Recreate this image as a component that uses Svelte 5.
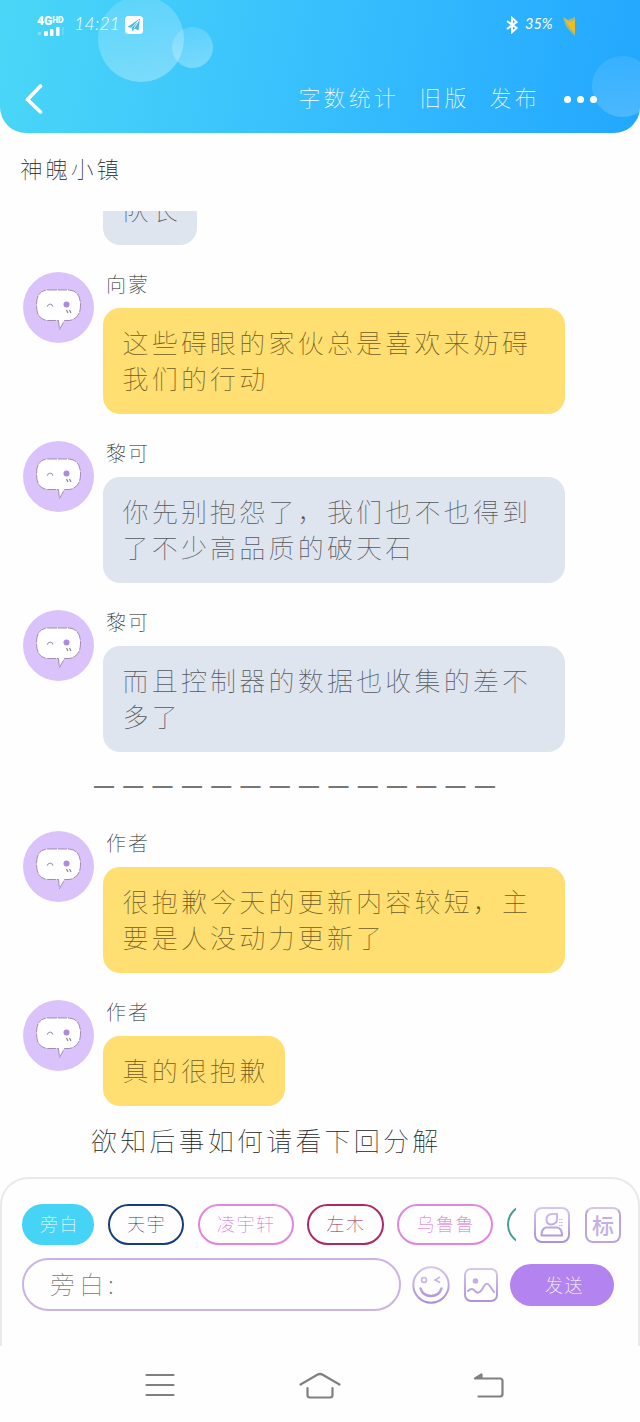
<script lang="ts">
	interface Message {
		kind: "left" | "narration" | "dashes";
		name?: string;
		text: string;
		color?: "yellow" | "grey";
	}

	let draft: string = $state("");

	const messages: Message[] = [
		{ kind: "left", name: "向蒙", color: "yellow", text: "这些碍眼的家伙总是喜欢来妨碍我们的行动" },
		{ kind: "left", name: "黎可", color: "grey", text: "你先别抱怨了，我们也不也得到了不少高品质的破天石" },
		{ kind: "left", name: "黎可", color: "grey", text: "而且控制器的数据也收集的差不多了" },
		{ kind: "dashes", text: "——————————————" },
		{ kind: "left", name: "作者", color: "yellow", text: "很抱歉今天的更新内容较短，主要是人没动力更新了" },
		{ kind: "left", name: "作者", color: "yellow", text: "真的很抱歉" },
		{ kind: "narration", text: "欲知后事如何请看下回分解" },
	];

	const roles = [
		{ name: "旁白", cls: "aside" },
		{ name: "天宇", cls: "navy" },
		{ name: "凌宇轩", cls: "pink" },
		{ name: "左木", cls: "crimson" },
		{ name: "乌鲁鲁", cls: "pink" },
		{ name: "", cls: "teal" },
	];
</script>

<div class="page">
	<header>
		<div class="bubble-deco big"></div>
		<div class="bubble-deco small"></div>
		<div class="bubble-deco side"></div>
		<div class="status">
			<div class="signal">
				<span class="net">4G<small>HD</small></span>
				<svg width="27" height="9" viewBox="0 0 27 9" fill="#fff">
					<rect x="1" y="5" width="3" height="3" opacity=".3" />
					<rect x="7" y="4" width="4" height="5" rx="1" />
					<rect x="13" y="2" width="3.5" height="7" rx="1" />
					<rect x="19" y="0" width="3.5" height="9" rx="1" />
					<rect x="25" y="0" width="1.5" height="8" opacity=".2" />
				</svg>
			</div>
			<span class="time">14:21</span>
			<svg class="plane" width="18" height="18" viewBox="0 0 18 18">
				<rect width="18" height="18" rx="3.5" fill="#fff" />
				<path d="M2.500 11 15 2.5 13.500 14.500 9.500 12.500 7.500 15.500 6.500 11.800Z" fill="#45b9e8" />
				<path d="M6.500 11.800 14 4 9 12.500" fill="none" stroke="#fff" stroke-width=".8" />
			</svg>
			<span class="spacer"></span>
			<svg width="12" height="18" viewBox="0 0 12 18" fill="none" stroke="#fff" stroke-width="2">
				<path d="M1 5 10.5 12 6 16.2V1.8L10.5 6 1 13" />
			</svg>
			<span class="percent">35%</span>
			<svg class="battery" width="14" height="22" viewBox="0 0 14 22">
				<path d="M1 2 6 5 13 2V21L8 16 4 11Z" fill="#9fb98a" />
				<path d="M2 3 8 7 13 5V18L8 13Z" fill="#f4bd16" />
			</svg>
		</div>
		<nav>
			<svg width="18" height="32" viewBox="0 0 18 32" fill="none" stroke="#fff" stroke-width="3.6" stroke-linecap="round" stroke-linejoin="round">
				<path d="M15.5 3 2.5 16.5 15.5 29" />
			</svg>
			<span class="spacer"></span>
			<span>字数统计</span>
			<span>旧版</span>
			<span>发布</span>
			<div class="dots"><i></i><i></i><i></i></div>
		</nav>
	</header>

	<h1>神魄小镇</h1>

	<main>
		<div class="message cut">
			<div class="body">
				<p class="text grey">队长</p>
			</div>
		</div>
		{#each messages as message}
			{#if message.kind === "left"}
				<div class="message">
					<svg class="avatar" width="71" height="71" viewBox="0 0 71 71">
						<circle cx="35.5" cy="35.5" r="35.5" fill="#dac2fb" />
						<path class="face" d="M25 18H46Q57.500 19 57.500 33T46 48.500H41.500L36.500 57.500 35.500 48.500H25Q13.500 48 13.500 33T25 18Z" />
						<path d="M24 34.500Q27.500 29.500 30 34.500" fill="none" stroke="#a08bb0" stroke-width="1.200" />
						<circle cx="43.5" cy="32.5" r="3" fill="#ab8be2" />
						<path d="M43.5 38 45 41M46.5 38 48 41" stroke="#8d7d9c" stroke-width="1.200" />
					</svg>
					<div class="body">
						<div class="name">{message.name}</div>
						<p class="text {message.color}">{message.text}</p>
					</div>
				</div>
			{:else}
				<div class={message.kind}>{message.text}</div>
			{/if}
		{/each}
	</main>

	<footer>
		<div class="row">
			<div class="roles">
				{#each roles as role}
					<span class="role {role.cls}">{role.name}</span>
				{/each}
			</div>
			<svg class="person" width="36" height="36" viewBox="0 0 36 36" fill="none" stroke="url(#violet)" stroke-width="2">
				<defs>
					<linearGradient id="violet" gradientUnits="userSpaceOnUse" x1="0" y1="0" x2="0" y2="38">
						<stop offset="0" stop-color="#d9c8ef" />
						<stop offset="1" stop-color="#a98bd4" />
					</linearGradient>
				</defs>
				<rect x="1" y="1" width="34" height="34" rx="7" />
				<path d="M23 7H18Q12.500 7.500 12.500 12.500 12.500 17.500 17.500 17.500 23 17 23 12Z" />
				<path d="M12 20.500H23.500Q28 21.500 28 28.500H7.500Q7.500 21.500 12 20.500Z" stroke-linejoin="round" />
				<path d="M25 12.500h3.500M25 15.500h3.500M25 18.500h3.500" stroke-width="1.2" stroke-dasharray="1.5 .5" />
			</svg>
			<span class="mark">标</span>
		</div>
		<div class="row second">
			<input type="text" placeholder="旁白:" bind:value={draft} />
			<svg class="smile" width="38" height="38" viewBox="0 0 38 38" fill="none" stroke="url(#violet)" stroke-width="2">
				<circle cx="19" cy="19" r="17.7" />
				<circle cx="12" cy="14" r="2.5" stroke-width="1.5" />
				<path d="M28 11 23 14 28 16.5" stroke-width="1.5" />
				<path d="M8.5 22.5Q11 30 19 30T29.5 22.5" stroke-width="2.4" stroke-linecap="round" />
			</svg>
			<svg class="photo" width="34" height="34" viewBox="0 0 34 34" fill="none" stroke="url(#violet)" stroke-width="2">
				<rect x="1" y="1" width="32" height="32" rx="6" />
				<circle cx="11.5" cy="13" r="2.8" fill="#c5aee8" stroke="none" />
				<path d="M4 23Q8 19 11 23 14.5 27 18 21.5 22 13 25 17L30 24" stroke-linecap="round" />
			</svg>
			<button>发送</button>
		</div>
	</footer>

	<div class="system">
		<svg width="30" height="24" viewBox="0 0 30 24">
			<path d="M1.5 2H28.5M1.5 12H28.5M1.5 22H28.5" />
		</svg>
		<svg width="42" height="27" viewBox="0 0 42 27">
			<path d="M1.5 12.5 17 3.5Q21 .5 25 3.500L40.5 12.5M8.5 16V23Q8.5 25.5 11 25.5H31Q33.5 25.5 33.5 23V16" />
		</svg>
		<svg width="31" height="25" viewBox="0 0 31 25">
			<path d="M8.500 1.500 2 5.500H27Q29.5 5.5 29.5 8V21Q29.5 23.500 27 23.500H5.5M3 5.200H8.500V2" />
		</svg>
	</div>
</div>

<style>
	:global(body) {
		margin: 0;
		background: #fefefe;
	}

	.page {
		width: 640px;
		height: 1422px;
		display: flex;
		flex-direction: column;
		overflow: hidden;
		font-family: "Noto Sans CJK SC", sans-serif;
		font-weight: 100;
		color: #222;
	}

	header {
		position: relative;
		height: 133px;
		flex: none;
		box-sizing: border-box;
		overflow: hidden;
		border-radius: 0 0 26px 26px;
		background: linear-gradient(100deg, #4ad7f7 0%, #37bffd 50%, #22a7ff 100%);
		color: #fff;
	}

	.bubble-deco {
		position: absolute;
		border-radius: 50%;
		background: linear-gradient(160deg, rgba(255, 255, 255, 0.12), rgba(255, 255, 255, 0.33));
	}

	.big {
		left: 98px;
		top: -4px;
		width: 86px;
		height: 86px;
	}

	.small {
		left: 172px;
		top: 27px;
		width: 41px;
		height: 41px;
	}

	.side {
		left: 592px;
		top: 56px;
		width: 61px;
		height: 61px;
		opacity: 0.6;
	}

	.status {
		position: relative;
		display: flex;
		align-items: center;
		height: 50px;
		padding: 0 64px 0 37px;
	}

	.signal {
		display: flex;
		flex-direction: column;
		width: 28px;
	}

	.net {
		font: 900 12px/11px Roboto, sans-serif;
		white-space: nowrap;
	}

	.net small {
		font-size: 8.5px;
		vertical-align: 2px;
	}

	.time {
		width: 51px;
		margin: -4px 0 0 9px;
		font: italic 300 18px/30px Lato, sans-serif;
	}

	.spacer {
		flex: 1;
	}

	.percent {
		width: 29px;
		margin: -2px 8px 0 7px;
		font: italic 14.5px/24px Lato, sans-serif;
	}

	.battery {
		margin-top: 2px;
	}

	nav {
		position: relative;
		display: flex;
		align-items: center;
		height: 100px;
		margin-top: -1px;
		padding: 0 43px 0 25px;
		gap: 20px;
		font-size: 22px;
		letter-spacing: 3.2px;
	}

	nav span:not(.spacer) {
		margin-top: -7px;
	}

	.dots {
		display: flex;
		gap: 6px;
		margin-left: 4px;
	}

	.dots i {
		width: 7px;
		height: 7px;
		border-radius: 50%;
		background: #fff;
	}

	h1 {
		flex: none;
		height: 78px;
		margin: 0;
		padding: 0 20px;
		box-sizing: border-box;
		font-size: 22.5px;
		font-weight: 100;
		line-height: 70px;
		letter-spacing: 3px;
	}

	main {
		flex: none;
		height: 966px;
		overflow: hidden;
	}

	.message {
		display: flex;
		align-items: flex-start;
		margin: 0 0 27px 23px;
	}

	.cut {
		margin: -37px 0 27px 94px;
	}

	.face {
		fill: #fff;
		stroke: #8e769e;
		stroke-width: 0.8;
		stroke-dasharray: 9 1;
	}

	.body {
		margin-left: 9px;
	}

	.name {
		height: 36px;
		padding-left: 3px;
		font-size: 20px;
		line-height: 24px;
		letter-spacing: 2px;
	}

	.text {
		width: fit-content;
		max-width: 462px;
		margin: 0;
		padding: 16.5px 16px 18.5px 19.5px;
		box-sizing: border-box;
		border-radius: 17px;
		font-size: 26px;
		line-height: 35.5px;
		letter-spacing: 3.2px;
	}

	.yellow {
		background: #ffdf72;
		color: #705c22;
	}

	.grey {
		background: #dfe5ee;
		color: #55595f;
	}

	.dashes {
		height: 79px;
		margin: -27px 0 0 94px;
		font: bold 20px/66px "Liberation Sans", sans-serif;
		letter-spacing: 9.3px;
		color: #777;
	}

	.narration {
		margin: -27px 0 0 91px;
		font-size: 26px;
		line-height: 67px;
		letter-spacing: 3.2px;
	}

	footer {
		flex: none;
		height: 169px;
		box-sizing: border-box;
		padding: 25px 15px 0 20px;
		border: 2px solid #e9e9e9;
		border-bottom: 0;
		border-radius: 28px 28px 0 0;
	}

	.row {
		display: flex;
		align-items: center;
	}

	.roles {
		display: flex;
		gap: 13.5px;
		width: 494px;
		overflow: hidden;
	}

	.role {
		flex: none;
		height: 41px;
		box-sizing: border-box;
		padding: 0 16px 0 17.5px;
		border: 2px solid;
		border-radius: 21px;
		font-size: 18px;
		line-height: 35px;
		letter-spacing: 1.5px;
		min-width: 72px;
	}

	.aside {
		border-color: #45d3f6;
		background: #45d3f6;
		color: #fff;
		padding: 0 13px 0 16px;
	}

	.navy {
		border-color: #183c80;
		color: #183c80;
	}

	.pink {
		border-color: #e285dc;
		color: #d66ccf;
	}

	.crimson {
		border-color: #ae2863;
		color: #8c2450;
	}

	.teal {
		border-color: #459d98;
	}

	.person {
		margin-left: 18px;
	}

	.mark {
		width: 36px;
		height: 36px;
		margin-left: 15px;
		box-sizing: border-box;
		border: 2px solid #bda4df;
		border-top-color: #d5c4ec;
		border-radius: 8px;
		font-size: 22px;
		font-weight: 500;
		line-height: 31px;
		text-align: center;
		color: #c5afe4;
	}

	.second {
		margin-top: 13px;
	}

	input {
		width: 379px;
		height: 53px;
		box-sizing: border-box;
		padding: 0 26px 3px;
		border: 2px solid #cbb2e7;
		border-radius: 27px;
		outline: none;
		background: none;
		font: inherit;
		font-size: 25px;
		letter-spacing: 4px;
	}

	input::placeholder {
		color: #777;
	}

	.smile {
		margin-left: 11px;
	}

	.photo {
		margin-left: 14px;
	}

	button {
		width: 104px;
		height: 42px;
		margin-left: 12px;
		padding: 0 0 2px 5px;
		border: none;
		border-radius: 21px;
		background: #b384ef;
		color: #fff;
		font: inherit;
		font-size: 18px;
		letter-spacing: 1.5px;
	}

	.system {
		flex: 1;
		display: flex;
		align-items: center;
		justify-content: space-between;
		padding: 2px 136px 0 145px;
	}

	.system svg {
		fill: none;
		stroke: #808080;
		stroke-width: 2.2;
		stroke-linecap: round;
		stroke-linejoin: round;
	}

	/* the three keys are not evenly wide, keep home centred */
	.system svg:nth-child(2) {
		margin-right: 4px;
		margin-left: -4px;
	}
</style>
